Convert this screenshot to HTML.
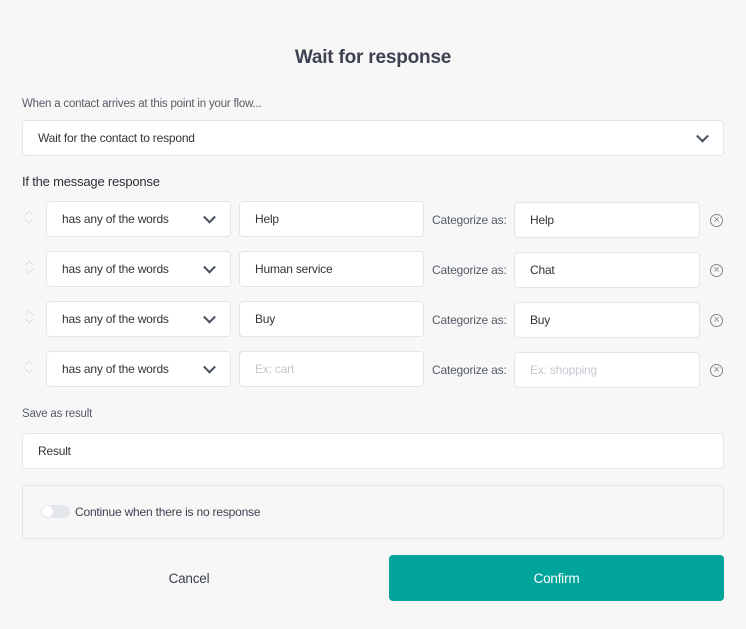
<!DOCTYPE html><html><head><style>
*{box-sizing:border-box;margin:0;padding:0}
body{width:746px;height:629px;background:#f7f7f7;font-family:"Liberation Sans",sans-serif;color:#333;position:relative;overflow:hidden;font-size:12px;letter-spacing:-0.2px}
.a{position:absolute}
.box{position:absolute;background:#fff;border:1px solid #e2e5ea;border-radius:4px;display:flex;align-items:center;padding-left:15px;font-size:12px;color:#333}
.ph{color:#c4c8cf}
.chev{position:absolute;right:16px;top:50%;width:9px;height:9px;border-right:2px solid #4a5260;border-bottom:2px solid #4a5260;transform:translateY(-70%) rotate(45deg)}
.lbl{position:absolute;font-size:12px;color:#555c68}
.x{position:absolute;width:13px;height:13px;border:1px solid #888;border-radius:50%;font-size:11px;line-height:10px;text-align:center;color:#888}
.sort{position:absolute;left:24px;width:10px;height:14px}
</style></head><body>
<div class="a" style="left:0;width:746px;top:47px;text-align:center;font-size:19px;font-weight:bold;color:#3d4250">Wait for response</div>
<div class="lbl" style="left:22px;top:98px;font-size:11.5px">When a contact arrives at this point in your flow...</div>
<div class="box" style="left:22px;top:120px;width:702px;height:36px">Wait for the contact to respond<div class="chev"></div></div>
<div class="a" style="left:22px;top:174px;font-size:13px;color:#2a2f38">If the message response</div>

<div class="sort" style="top:210px"><svg width="10" height="14"><path d="M1 5L5 1L9 5M1 9L5 13L9 9" fill="none" stroke="#dde0e4"/></svg></div>
<div class="box" style="left:46px;top:201px;width:185px;height:36px">has any of the words<div class="chev"></div></div>
<div class="box" style="left:239px;top:201px;width:185px;height:36px">Help</div>
<div class="lbl" style="left:432px;top:213px">Categorize as:</div>
<div class="box" style="left:514px;top:202px;width:186px;height:36px">Help</div>
<div class="x" style="left:710px;top:214px">×</div>

<div class="sort" style="top:260px"><svg width="10" height="14"><path d="M1 5L5 1L9 5M1 9L5 13L9 9" fill="none" stroke="#dde0e4"/></svg></div>
<div class="box" style="left:46px;top:251px;width:185px;height:36px">has any of the words<div class="chev"></div></div>
<div class="box" style="left:239px;top:251px;width:185px;height:36px">Human service</div>
<div class="lbl" style="left:432px;top:263px">Categorize as:</div>
<div class="box" style="left:514px;top:252px;width:186px;height:36px">Chat</div>
<div class="x" style="left:710px;top:264px">×</div>

<div class="sort" style="top:310px"><svg width="10" height="14"><path d="M1 5L5 1L9 5M1 9L5 13L9 9" fill="none" stroke="#dde0e4"/></svg></div>
<div class="box" style="left:46px;top:301px;width:185px;height:36px">has any of the words<div class="chev"></div></div>
<div class="box" style="left:239px;top:301px;width:185px;height:36px">Buy</div>
<div class="lbl" style="left:432px;top:313px">Categorize as:</div>
<div class="box" style="left:514px;top:302px;width:186px;height:36px">Buy</div>
<div class="x" style="left:710px;top:314px">×</div>

<div class="sort" style="top:360px"><svg width="10" height="14"><path d="M1 5L5 1L9 5M1 9L5 13L9 9" fill="none" stroke="#dde0e4"/></svg></div>
<div class="box" style="left:46px;top:351px;width:185px;height:36px">has any of the words<div class="chev"></div></div>
<div class="box ph" style="left:239px;top:351px;width:185px;height:36px">Ex: cart</div>
<div class="lbl" style="left:432px;top:363px">Categorize as:</div>
<div class="box ph" style="left:514px;top:352px;width:186px;height:36px">Ex: shopping</div>
<div class="x" style="left:710px;top:364px">×</div>

<div class="lbl" style="left:22px;top:408px;font-size:11.5px">Save as result</div>
<div class="box" style="left:22px;top:433px;width:702px;height:36px">Result</div>

<div class="a" style="left:22px;top:485px;width:702px;height:54px;border:1px solid #e2e5ea;border-radius:4px;background:#f7f7f7"></div>
<div class="a" style="left:41px;top:505px;width:29px;height:13px;border-radius:7px;background:#e3e6ea"></div>
<div class="a" style="left:42px;top:506px;width:11px;height:11px;border-radius:50%;background:#fff"></div>
<div class="a" style="left:75px;top:505px;font-size:12px;color:#3d4250">Continue when there is no response</div>

<div class="a" style="left:22px;top:571px;width:334px;text-align:center;font-size:13.5px;color:#3d4250">Cancel</div>
<div class="a" style="left:389px;top:555px;width:335px;height:46px;background:#00a49a;border-radius:4px;color:#fff;font-size:13.5px;display:flex;align-items:center;justify-content:center">Confirm</div>
</body></html>
